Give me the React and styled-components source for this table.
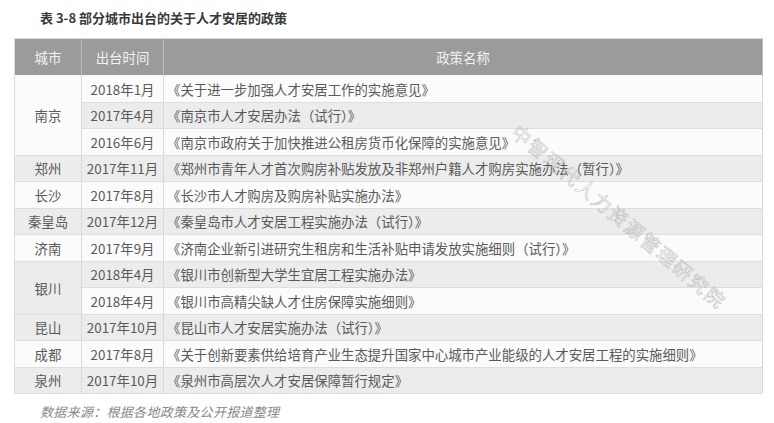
import React from 'react';
import styled, { createGlobalStyle } from 'styled-components';

const GlobalStyle = createGlobalStyle`
  body {
    margin: 0;
    background: #fff;
    font-family: "Noto Sans CJK SC", "Noto Sans", sans-serif;
  }
`;

const rows = [
  { city: '南京', span: 3, date: '2018年1月', name: '《关于进一步加强人才安居工作的实施意见》' },
  { date: '2017年4月', name: '《南京市人才安居办法（试行）》' },
  { date: '2016年6月', name: '《南京市政府关于加快推进公租房货币化保障的实施意见》' },
  { city: '郑州', span: 1, date: '2017年11月', name: '《郑州市青年人才首次购房补贴发放及非郑州户籍人才购房实施办法（暂行）》' },
  { city: '长沙', span: 1, date: '2017年8月', name: '《长沙市人才购房及购房补贴实施办法》' },
  { city: '秦皇岛', span: 1, date: '2017年12月', name: '《秦皇岛市人才安居工程实施办法（试行）》' },
  { city: '济南', span: 1, date: '2017年9月', name: '《济南企业新引进研究生租房和生活补贴申请发放实施细则（试行）》' },
  { city: '银川', span: 2, date: '2018年4月', name: '《银川市创新型大学生宜居工程实施办法》' },
  { date: '2018年4月', name: '《银川市高精尖缺人才住房保障实施细则》' },
  { city: '昆山', span: 1, date: '2017年10月', name: '《昆山市人才安居实施办法（试行）》' },
  { city: '成都', span: 1, date: '2017年8月', name: '《关于创新要素供给培育产业生态提升国家中心城市产业能级的人才安居工程的实施细则》' },
  { city: '泉州', span: 1, date: '2017年10月', name: '《泉州市高层次人才安居保障暂行规定》' },
];

const Page = styled.div`
  width: 774px;
  height: 423px;
  padding: 9px 0 0 14px;
  box-sizing: border-box;
`;

const Title = styled.div`
  margin-left: 26px;
  font-size: 13px;
  font-weight: bold;
  color: #3a3a3a;
  line-height: 18px;
`;

const TableWrap = styled.div`
  position: relative;
  margin-top: 11px;
  width: 749px;
`;

const Table = styled.table`
  width: 749px;
  border-collapse: collapse;
  table-layout: fixed;
  border: 1px solid #dcdcdc;
  font-size: 13.4px;
  color: #5a5a5a;
`;

const HeadCell = styled.th`
  height: 36px;
  background: #9b9b9b;
  color: #f2f2f2;
  font-weight: normal;
  text-align: center;
  border-right: 1px solid #bdbdbd;
  padding: 0;
`;

const Row = styled.tr`
  height: 26.5px;
`;

const Cell = styled.td`
  background: ${p => (p.shaded ? '#ececec' : '#fbfbfb')};
  text-align: ${p => (p.left ? 'left' : 'center')};
  padding: 0 0 0 ${p => (p.left ? '3px' : '0')};
  border-top: 1px solid #f8f8f8;
  border-bottom: 1px solid #dedede;
  border-right: 1px solid #d8d8d8;
  white-space: nowrap;
  line-height: 18px;
`;

const Watermark = styled.div`
  position: absolute;
  left: 510px;
  top: 80px;
  transform: rotate(40deg);
  transform-origin: left top;
  font-size: 19px;
  letter-spacing: 2px;
  white-space: nowrap;
  color: transparent;
  -webkit-text-stroke: 0.45px #b2b2b2;
  pointer-events: none;
`;

const Source = styled.div`
  margin: 8px 0 0 26px;
  font-size: 13px;
  font-style: italic;
  color: #8a8a8a;
  letter-spacing: 0.3px;
`;

export default function App() {
  return (
    <Page>
      <GlobalStyle />
      <Title>表 3-8 部分城市出台的关于人才安居的政策</Title>
      <TableWrap>
        <Table>
          <colgroup>
            <col style={{ width: 67 }} />
            <col style={{ width: 82 }} />
            <col />
          </colgroup>
          <thead>
            <tr>
              <HeadCell>城市</HeadCell>
              <HeadCell>出台时间</HeadCell>
              <HeadCell>政策名称</HeadCell>
            </tr>
          </thead>
          <tbody>
            {rows.map((r, i) => {
              const shaded = i % 2 === 1;
              return (
                <Row key={i}>
                  {r.city && (
                    <Cell rowSpan={r.span} shaded={r.city === '南京' ? false : shaded}>
                      {r.city}
                    </Cell>
                  )}
                  <Cell shaded={shaded}>{r.date}</Cell>
                  <Cell shaded={shaded} left>{r.name}</Cell>
                </Row>
              );
            })}
          </tbody>
        </Table>
        <Watermark>中智现代人力资源管理研究院</Watermark>
      </TableWrap>
      <Source>数据来源：根据各地政策及公开报道整理</Source>
    </Page>
  );
}
